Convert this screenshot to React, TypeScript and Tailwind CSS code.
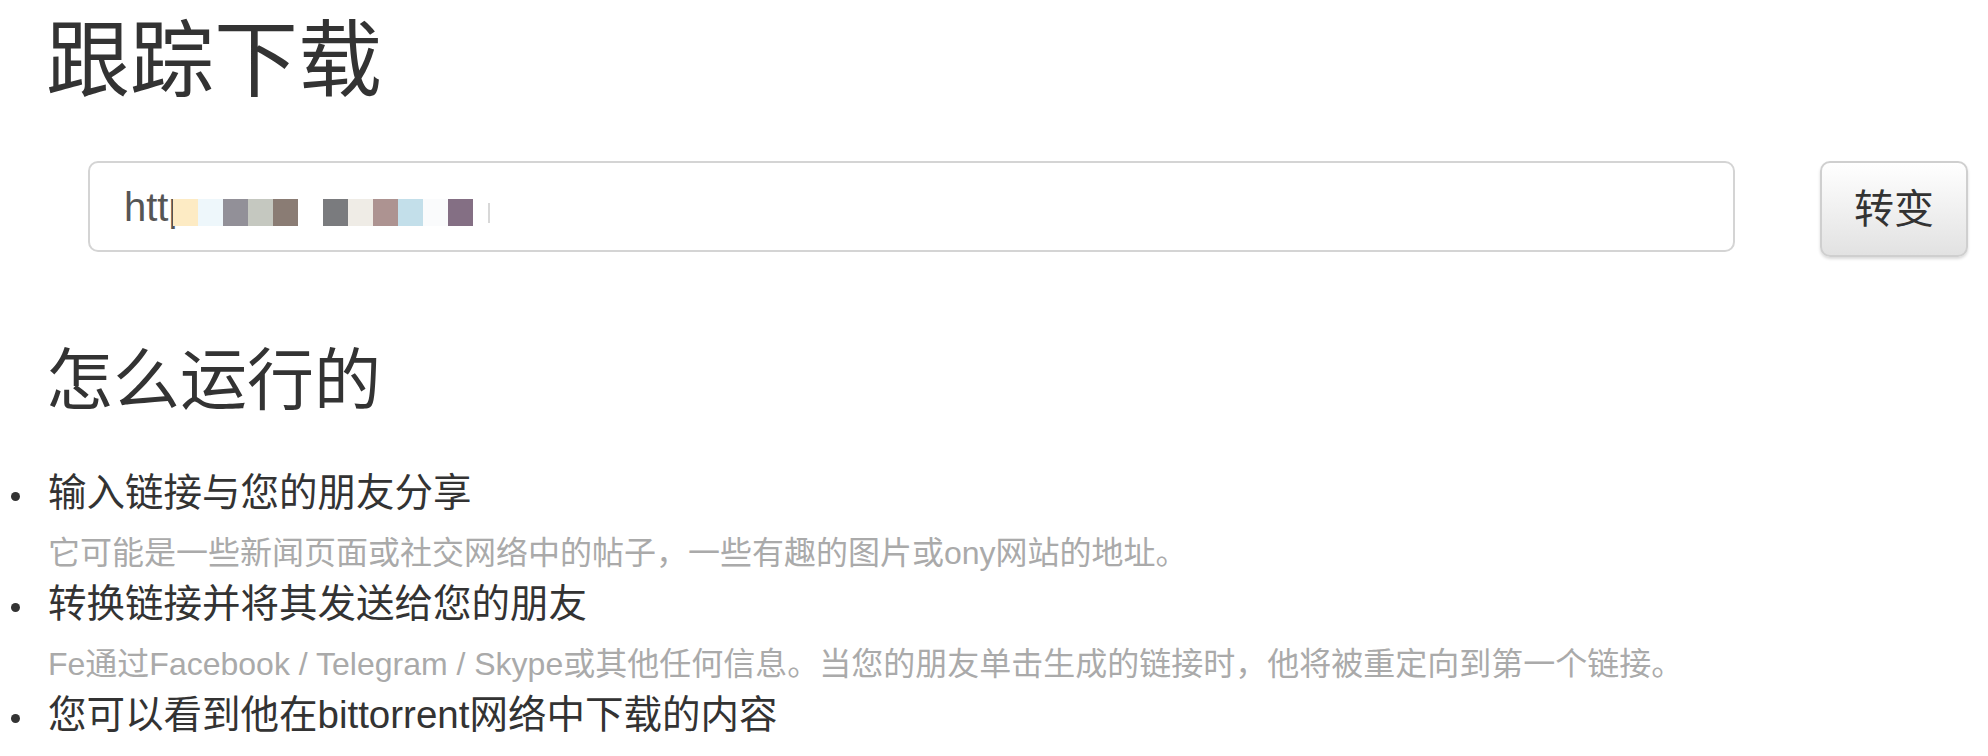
import React from "react";

const blocks = [
  "#fdebc4",
  "#eef7fb",
  "#929098",
  "#c5c8c0",
  "#8a7c74",
  "#ffffff",
  "#7a7b7e",
  "#efece6",
  "#ad9391",
  "#c3dfea",
  "#fafbfc",
  "#846f84",
];

const items = [
  {
    title: "输入链接与您的朋友分享",
    sub: "它可能是一些新闻页面或社交网络中的帖子，一些有趣的图片或ony网站的地址。",
  },
  {
    title: "转换链接并将其发送给您的朋友",
    sub: "Fe通过Facebook / Telegram / Skype或其他任何信息。当您的朋友单击生成的链接时，他将被重定向到第一个链接。",
  },
  {
    title: "您可以看到他在bittorrent网络中下载的内容",
    sub: "",
  },
];

export default function App() {
  return (
    <div
      className="w-[1988px] h-[756px] bg-white overflow-hidden text-[#333]"
      style={{ fontFamily: '"Liberation Sans", "Noto Sans CJK SC", sans-serif' }}
    >
      <h1 className="pl-[46px] pt-[11px] text-[84px] leading-[100px] font-normal">跟踪下载</h1>

      <div className="flex items-start mt-[50px]">
        <div className="relative ml-[88px] w-[1647px] h-[91px] border-2 border-[#d4d4d4] rounded-[10px] flex items-center pl-[34px] text-[40px] text-[#555]">
          <span>http</span>
          <div className="absolute left-[83px] top-[36px] flex">
            {blocks.map((c, i) => (
              <div key={i} className="w-[25px] h-[27px]" style={{ backgroundColor: c }} />
            ))}
          </div>
          <span className="absolute left-[398px] top-[40px] w-[2px] h-[20px] bg-[#d8d8d8]" />
        </div>
        <button className="ml-[85px] w-[148px] h-[96px] rounded-[10px] border-2 border-[#cfcfcf] bg-gradient-to-b from-white to-[#e2e2e2] shadow-[0_2px_3px_rgba(0,0,0,0.15)] text-[40px] text-[#333]">
          转变
        </button>
      </div>

      <h2 className="pl-[46px] mt-[84px] text-[67px] leading-[80px] font-normal">怎么运行的</h2>

      <ul className="mt-[48px]">
        {items.map((it, i) => (
          <li key={i} className="relative pl-[48px]">
            <span className="absolute left-[11px] top-[23px] w-[9px] h-[9px] rounded-full bg-[#333]" />
            <div className="text-[38.5px] leading-[48px] text-[#333]">{it.title}</div>
            {it.sub && (
              <div className="mt-[9px] text-[32px] leading-[54px] text-[#aaaaaa]">{it.sub}</div>
            )}
          </li>
        ))}
      </ul>
    </div>
  );
}
